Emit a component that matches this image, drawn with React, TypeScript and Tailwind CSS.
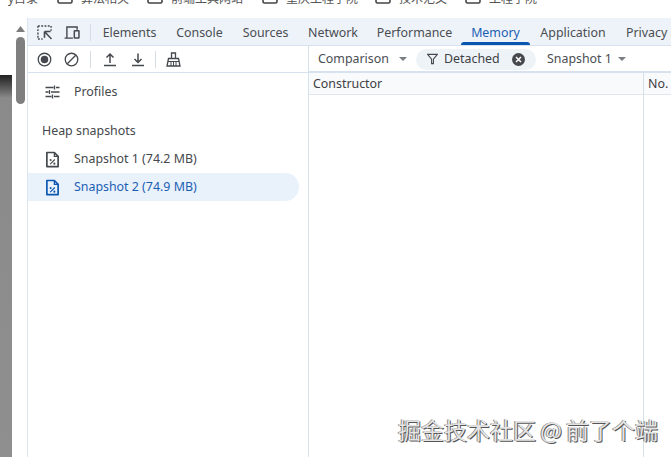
import React from "react";

const font = { fontFamily: '"Noto Sans", "Noto Sans CJK SC", sans-serif' };

function Folder() {
  return (
    <svg width="16" height="14" viewBox="0 0 16 14" className="shrink-0 -mt-[6px]">
      <path d="M1 0v7.5a1.5 1.5 0 0 0 1.5 1.5h11a1.5 1.5 0 0 0 1.5-1.5V0" fill="none" stroke="#444" strokeWidth="1.6" />
    </svg>
  );
}

function Mark({ label, w }: { label: string; w: string }) {
  return (
    <div className={`flex items-start gap-[8px] shrink-0 ${w}`}>
      <Folder />
      <span className="text-[12px] leading-[14px] -mt-[8px] text-[#555] whitespace-nowrap">{label}</span>
    </div>
  );
}

function Divider() {
  return <div className="w-px h-[17px] bg-[#d5dce4]" />;
}

function SnapIcon({ c }: { c: string }) {
  return (
    <svg width="15" height="17" viewBox="0 0 16 18" className="shrink-0">
      <path d="M2 1.5h8l4 4.2v10.8H2z" fill="none" stroke={c} strokeWidth="1.8" strokeLinejoin="round" />
      <path d="M10 1.5v4.2h4" fill="none" stroke={c} strokeWidth="1.4" />
      <path d="M5.5 14l5-5" stroke={c} strokeWidth="1.2" />
      <circle cx="6" cy="9.5" r="1.1" fill={c} />
      <circle cx="10" cy="13.4" r="1.1" fill={c} />
    </svg>
  );
}

function Tab({ label, active, w }: { label: string; active?: boolean; w: string }) {
  return (
    <div className={`relative h-full flex items-center justify-center shrink-0 whitespace-nowrap pt-[1px] ${w} ${active ? "text-[#1b5fb5]" : "text-[#4a4d52]"}`}>
      {label}
      {active && <div className="absolute bottom-0 left-0 right-0 h-[3px] rounded-t-[3px] bg-[#0b57b0]" />}
    </div>
  );
}

export default function App() {
  return (
    <div className="w-[671px] h-[457px] overflow-hidden bg-white flex flex-col text-[12.4px]" style={font}>
      <div className="h-[18px] shrink-0 overflow-hidden flex items-start bg-white pl-[8px]">
        <span className="text-[12px] leading-[14px] -mt-[8px] text-[#555] w-[49px] shrink-0 whitespace-nowrap">y目录</span>
        <Mark label="算法相关" w="w-[90px]" />
        <Mark label="前端工具网站" w="w-[115px]" />
        <Mark label="重庆工程学院" w="w-[113px]" />
        <Mark label="技术范文" w="w-[90px]" />
        <Mark label="工程学院" w="w-[90px]" />
      </div>
      <div className="flex-1 flex min-h-0">
        <div className="w-[14px] shrink-0 flex flex-col bg-white">
          <div className="h-[57px] shrink-0" />
          <div className="flex-1 bg-gradient-to-b from-[#222] via-[#8a8a8a] to-[#8f8f8f] from-[0%] via-[6%] w-[12px]" />
        </div>
        <div className="w-[14px] shrink-0 flex flex-col items-center bg-white pt-[8px] border-r border-[#dde5ec]">
          <svg width="9" height="6" viewBox="0 0 9 6"><path d="M4.5 0L9 6H0z" fill="#7d7d7d" /></svg>
          <div className="w-[9px] h-[67px] mt-[5px] rounded-full bg-[#7f7f7f]" />
        </div>
        <div className="flex-1 min-w-0 flex flex-col">
          <div className="h-[28px] shrink-0 flex items-center bg-[#eef3f9] border-b border-[#d6e2ee] overflow-hidden pt-[2px]">
            <svg width="15" height="15" viewBox="0 0 16 16" className="ml-[9px] shrink-0">
              <path d="M1 1h14M1 1v14M15 1v5M1 15h5" fill="none" stroke="#45484c" strokeWidth="1.5" strokeDasharray="2 1.5" />
              <path d="M8 7h6.5M8 7v6.5M8.5 7.5l7 7.5" fill="none" stroke="#45484c" strokeWidth="1.7" />
            </svg>
            <svg width="16" height="13" viewBox="0 0 17 14" className="ml-[12px] shrink-0">
              <path d="M0.5 13h9M3 13V1h11v3" fill="none" stroke="#45484c" strokeWidth="1.5" />
              <rect x="11" y="5" width="5" height="8" rx="0.5" fill="none" stroke="#45484c" strokeWidth="1.6" />
            </svg>
            <div className="ml-[10px] mr-[2px] shrink-0"><Divider /></div>
            <Tab label="Elements" w="w-[73px]" />
            <Tab label="Console" w="w-[67px]" />
            <Tab label="Sources" w="w-[65px]" />
            <Tab label="Network" w="w-[70px]" />
            <Tab label="Performance" w="w-[93px]" />
            <Tab label="Memory" w="w-[69px]" active />
            <Tab label="Application" w="w-[86px]" />
            <div className="ml-[10px] pt-[1px] text-[#4a4d52] whitespace-nowrap">Privacy and security</div>
          </div>
          <div className="flex-1 min-h-0 flex">
            <div className="w-[281px] shrink-0 flex flex-col border-r border-[#d6e2ee]">
              <div className="h-[27px] shrink-0 flex items-center border-b border-[#d6e2ee] pl-[9px] pt-[1px]">
                <svg width="15" height="15" viewBox="0 0 16 16" className="shrink-0">
                  <circle cx="8" cy="8" r="6.7" fill="none" stroke="#45484c" strokeWidth="1.4" />
                  <circle cx="8" cy="8" r="4" fill="#45484c" />
                </svg>
                <svg width="15" height="15" viewBox="0 0 16 16" className="ml-[12px] shrink-0">
                  <circle cx="8" cy="8" r="6.7" fill="none" stroke="#45484c" strokeWidth="1.4" />
                  <path d="M3.5 12.5l9-9" stroke="#45484c" strokeWidth="1.4" />
                </svg>
                <div className="ml-[11px] shrink-0"><Divider /></div>
                <svg width="14" height="15" viewBox="0 0 14 15" className="ml-[12px] shrink-0">
                  <path d="M1 13.5h12M7 11V2M3.5 5.5L7 2l3.5 3.5" fill="none" stroke="#45484c" strokeWidth="1.5" />
                </svg>
                <svg width="14" height="15" viewBox="0 0 14 15" className="ml-[14px] shrink-0">
                  <path d="M1 13.5h12M7 1.5v9M3.5 7L7 10.5 10.5 7" fill="none" stroke="#45484c" strokeWidth="1.5" />
                </svg>
                <div className="ml-[10px] shrink-0"><Divider /></div>
                <svg width="15" height="15" viewBox="0 0 15 15" className="ml-[10px] shrink-0">
                  <path d="M5.5 6V1h4v5M2.5 6.5h10l1.500 7.500h-13z" fill="none" stroke="#45484c" strokeWidth="1.3" />
                  <path d="M5 10v4M7.500 10v4M10 10v4M2 9.500h11" stroke="#45484c" strokeWidth="1" />
                </svg>
              </div>
              <div className="flex-1 pr-[9px] pt-[5px]">
                <div className="h-[28px] flex items-center pl-[17px] gap-[14px] text-[#45484c]">
                  <svg width="15" height="14" viewBox="0 0 15 14" className="shrink-0">
                    <path d="M0.5 2.500h8M11 2.500h3.500M0.500 7h3M6 7h8.500M0.500 11.500h6M9 11.500h5.500M9.500 0.500v4M4.500 5v4M7.500 9.500v4" fill="none" stroke="#45484c" strokeWidth="1.3" />
                  </svg>
                  <span>Profiles</span>
                </div>
                <div className="mt-[13px] h-[24px] flex items-center pl-[14px] text-[#45484c]">Heap snapshots</div>
                <div className="mt-[2px] h-[28px] flex items-center pl-[17px] gap-[14px] text-[#45484c]">
                  <SnapIcon c="#45484c" />
                  <span>Snapshot 1 (74.2 MB)</span>
                </div>
                <div className="h-[28px] flex items-center pl-[17px] gap-[14px] rounded-r-full bg-[#e9f1fb] text-[#1b5fb5]">
                  <SnapIcon c="#0b57b0" />
                  <span>Snapshot 2 (74.9 MB)</span>
                </div>
              </div>
            </div>
            <div className="flex-1 min-w-0 flex flex-col">
              <div className="h-[27px] shrink-0 flex items-center border-b-2 border-[#d6e2ee] pl-[9px] pt-[1px] text-[#4a4d52]">
                <span className="whitespace-nowrap w-[69px] shrink-0 pt-[1px]">Comparison</span>
                <svg width="8" height="4" viewBox="0 0 8 4" className="ml-[12px] shrink-0"><path d="M0 0h8L4 4z" fill="#7a7d81" /></svg>
                <div className="ml-[9px] h-[21px] w-[120px] shrink-0 rounded-full bg-[#eef3f8] flex items-center pl-[11px]">
                  <svg width="11" height="12" viewBox="0 0 12 12" className="shrink-0"><path d="M0.700 1h10.600L7 6.200V11H5V6.200z" fill="none" stroke="#45484c" strokeWidth="1.200" /></svg>
                  <span className="ml-[6px] w-[54px] shrink-0 pt-[1px] text-[#3d4044]">Detached</span>
                  <svg width="13" height="13" viewBox="0 0 13 13" className="ml-[14px] shrink-0">
                    <circle cx="6.500" cy="6.500" r="6.500" fill="#45484c" />
                    <path d="M4 4l5 5M9 4l-5 5" stroke="#fff" strokeWidth="1.500" />
                  </svg>
                </div>
                <span className="ml-[11px] w-[63px] shrink-0 pt-[1px] whitespace-nowrap">Snapshot 1</span>
                <svg width="8" height="4" viewBox="0 0 8 4" className="ml-[8px] shrink-0"><path d="M0 0h8L4 4z" fill="#7a7d81" /></svg>
              </div>
              <div className="h-[22px] shrink-0 flex bg-[#f9fafb] border-b border-[#dfe6ed] text-[#3d4044] items-center">
                <div className="w-[335px] pl-[4px] pt-[2px] h-full flex items-center border-r border-[#d6dee6]">Constructor</div>
                <div className="pl-[4px] pt-[2px]">No.</div>
              </div>
              <div className="flex-1 relative">
                <div className="w-[335px] h-full border-r border-[#d6dee6]" />
                <div className="absolute left-[89px] top-[318px] text-[23px] leading-[32px] whitespace-nowrap text-[#e4e4e4]" style={{ textShadow: "1px 1px 0 #555, -1px 0 0 #888", fontFamily: '"Noto Sans CJK SC", sans-serif', wordSpacing: "-1px" }}>
                  掘金技术社区 @ 前了个端
                </div>
              </div>
            </div>
          </div>
        </div>
      </div>
    </div>
  );
}
